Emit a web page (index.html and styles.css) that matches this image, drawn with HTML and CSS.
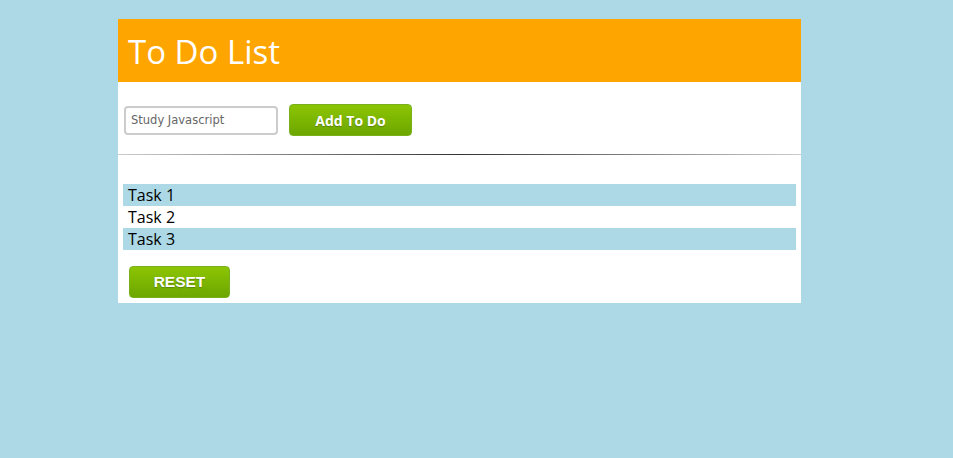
FILE: index.html
```html
<!DOCTYPE html>
<html>
<head>
<meta charset="utf-8">
<link rel="stylesheet" href="styles.css">
</head>
<body>
<div class="app">
  <header class="header"><h1 class="title">To Do List</h1></header>
  <div class="form-row">
    <input class="task-input" type="text" placeholder="Study Javascript">
    <button class="btn btn-add">Add To Do</button>
  </div>
  <hr class="divider">
  <ul class="tasks">
    <li class="task odd">Task 1</li>
    <li class="task">Task 2</li>
    <li class="task odd">Task 3</li>
  </ul>
  <div class="reset-row"><button class="btn btn-reset">RESET</button></div>
</div>
</body>
</html>
```
FILE: styles.css
```css
html, body { margin: 0; padding: 0; }
body { background: #add8e6; font-family: "Open Sans", sans-serif; }
.app { width: 683px; margin: 19px 0 0 118px; background: #fff; }
.header { background: #ffa500; height: 63px; display: flex; align-items: center; }
.title { margin: 0; padding-left: 10px; color: #fff; font-weight: 400; font-size: 33px; line-height: 1; position: relative; top: 1px; }
.form-row { display: flex; align-items: center; padding: 22px 6px 18px 6px; gap: 11px; height: 32px; }
.task-input { box-sizing: border-box; width: 154px; height: 29px; border: 2px solid #ccc; border-radius: 4px; padding: 0 5px; font-family: "DejaVu Sans", sans-serif; font-size: 11.5px; color: #666; outline: none; }
.task-input::placeholder { color: #666; }
.btn { box-sizing: border-box; height: 32px; border: 1px solid #78b11b; border-radius: 4px; background: linear-gradient(#8cc503, #6da600); color: #fff; font-weight: bold; cursor: pointer; text-shadow: 0 1px 1px rgba(0,0,0,0.25); }
.btn-add { width: 123px; font-family: "Open Sans", sans-serif; font-size: 14px; }
.divider { margin: 0; border: 0; height: 1px; background: linear-gradient(to right, #ccc, #333, #ccc); }
.tasks { list-style: none; margin: 29px 5px 0 5px; padding: 0; }
.task { height: 22px; line-height: 22px; padding-left: 5px; font-size: 16px; color: #000; }
.task.odd { background: #add8e6; }
.reset-row { padding: 16px 0 5px 11px; }
.btn-reset { display: block; width: 101px; font-family: "Liberation Sans", Arial, sans-serif; font-size: 15.5px; }
```
